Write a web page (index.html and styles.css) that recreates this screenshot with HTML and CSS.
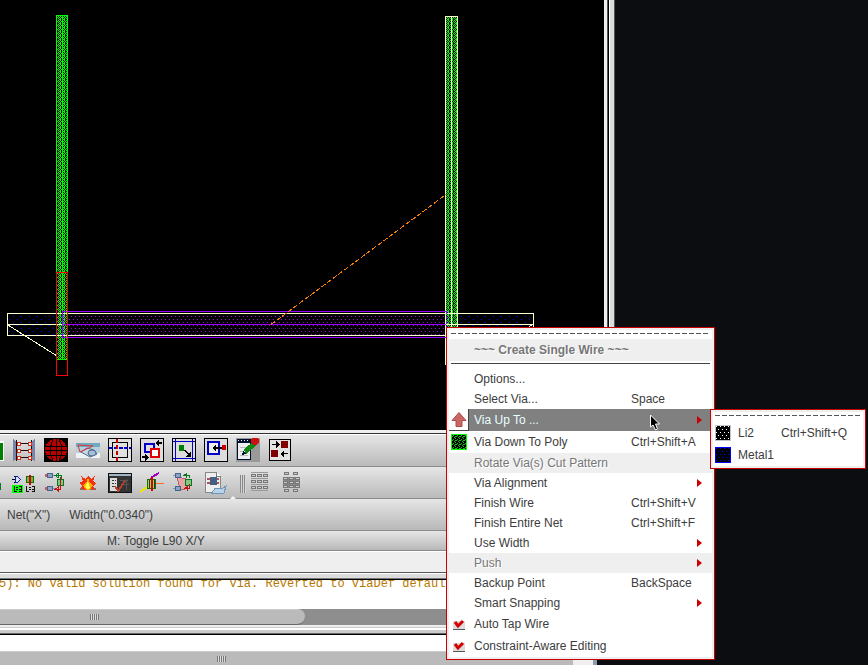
FILE: index.html
```html
<!DOCTYPE html>
<html lang="en">
<head>
<meta charset="utf-8">
<title>Layout Editor</title>
<link rel="stylesheet" href="styles.css">
</head>
<body>
<div class="workspace">
  <main class="editor">
    <section class="view">
      <svg class="drawing" width="604" height="430" shape-rendering="crispEdges" role="img" aria-label="Wire layout">
        <defs>
          <pattern id="poly" width="4" height="4" patternUnits="userSpaceOnUse">
            <path fill="#00ff00" d="M0 0h1v1h-1zM2 0h1v1h-1zM1 1h1v1h-1zM3 1h1v1h-1zM0 2h1v1h-1zM2 2h1v1h-1zM0 3h1v1h-1zM3 3h1v1h-1z"/>
          </pattern>
          <pattern id="metal" width="8" height="6" patternUnits="userSpaceOnUse">
            <path fill="#0000ff" d="M1 1h1v1h-1zM5 4h1v1h-1z"/>
          </pattern>
          <pattern id="wire" width="4" height="6" patternUnits="userSpaceOnUse">
            <path fill="#9900e6" d="M1 1h1v1h-1zM3 4h1v1h-1z"/>
          </pattern>
        </defs>
        <rect x="8" y="314" width="525" height="21" fill="url(#metal)"/>
        <rect x="63" y="312" width="383" height="25" fill="#000"/>
        <rect x="63" y="312" width="383" height="25" fill="url(#wire)"/>
        <rect x="56" y="15" width="12" height="345" fill="url(#poly)"/>
        <rect x="56.5" y="15.5" width="11" height="344" fill="none" stroke="#00ff00"/>
        <path stroke="#00ff00" d="M62.5 15V360"/>
        <rect x="445" y="16" width="13" height="312" fill="url(#poly)"/>
        <path stroke="#ffffcc" fill="none" d="M445.5 365V16.5H457.5V328M451.5 16V328"/>
        <path stroke="#ffffcc" fill="none" d="M7.5 313.5H533.5V335.5H7.5zM8 324.5H62M446 324.5H533M8 325L57 356M533 324L526 329"/>
        <path stroke="#9900ff" fill="none" d="M446 311.5H62.5V337.5H446M62 324.5H446"/>
        <path stroke="#9900ff" stroke-dasharray="3 2" d="M446.5 311V337"/>
        <path stroke="#ff8000" stroke-dasharray="5 2" d="M271 324.5L446 194.5"/>
        <rect x="56.5" y="272.5" width="11" height="103" fill="none" stroke="#ff0000"/>
      </svg>
      <div class="frame-edge"></div>
    </section>

    <div class="toolbar" role="toolbar" aria-label="Edit">
      <button class="tool cut" aria-label="Layer"><svg width="4" height="24"><path fill="#fff" d="M0 3h4v20H0z"/><path fill="#008000" d="M0 5h3v17H0z"/></svg></button>
      <button class="tool" aria-label="Ladder"><svg viewBox="0 0 24 24"><path fill="#7885a8" d="M1 1l4 3v17l-4 2zM23 1l-4 3v17l4 2z"/><path stroke="#111" fill="none" d="M4.500 2V23M19.500 2V23M6 5.500H18M6 12.500H18M6 19.500H18"/><path fill="#fff" stroke="#d92b15" d="M5.500 4.500h3v3h-3zM16.500 4.500h3v3h-3zM5.500 11.500h3v3h-3zM16.500 11.500h3v3h-3zM5.500 18.500h3v3h-3zM16.500 18.500h3v3h-3z"/></svg></button>
      <button class="tool" aria-label="World"><svg viewBox="0 0 24 24"><path d="M0 0h24v24H0z"/><circle cx="12" cy="12" r="11" fill="#b80000"/><path stroke="#000" fill="none" d="M2 8.500H22M1 12.500H23M2 17.500H22M12.500 1V23M9 1Q4 12 9 23M15 1Q21 12 15 23"/></svg></button>
      <button class="tool" aria-label="Preview"><svg viewBox="0 0 24 24" class="smooth"><path fill="#6eabc0" d="M0 5h24v6H0z"/><path fill="#b8d0dc" d="M0 9h24v8H0z"/><path fill="#eef3f5" d="M0 15h24v5H0z"/><path fill="#c6dae5" stroke="#536d91" stroke-width="1" d="M5 14l6-4 7 2 3 4-7 3z"/><path stroke="#dc3434" stroke-width="1" fill="none" d="M2 7L17 8 4 14z"/><ellipse cx="16" cy="15" rx="4" ry="3" fill="#a8bfd4" stroke="#496796"/></svg></button>
      <button class="tool" aria-label="Crosshair"><svg viewBox="0 0 24 24"><path fill="#e0e0e0" stroke="#000" d="M.5.5h23v23H.5z"/><path fill="none" stroke="#000" d="M4.500 4.500h15v15h-15z"/><path stroke="#0000c8" stroke-width="2" stroke-dasharray="4 1" d="M1 10H23"/><path stroke="#c80000" stroke-width="2" stroke-dasharray="4 2" d="M9 1V23"/></svg></button>
      <button class="tool" aria-label="Push out"><svg viewBox="0 0 24 24"><path fill="#ddd" stroke="#000" d="M.5.5h23v23H.5z"/><path fill="none" stroke="#0000c8" stroke-width="2" d="M5 6h9v8H5z"/><path fill="#fff" stroke="#e00000" stroke-width="2" d="M11 11h8v8h-8z"/><path d="M2 18h3v-2l4 3-4 4v-3H2zM22 4h-3V2l-4 3 4 4V6h3z"/></svg></button>
      <button class="tool" aria-label="Stretch"><svg viewBox="0 0 24 24"><path fill="#ddd" stroke="#000" d="M.5.5h23v23H.5z"/><path stroke="#0000c8" d="M3.500 1V23M20.500 1V23M1 3.500H23M1 20.500H23"/><path fill="#008000" d="M7 7h5v6H7z"/><path d="M12 12l2 0 3 4 1-2h1v5h-5v-1l2-1z"/></svg></button>
      <button class="tool" aria-label="Move edge"><svg viewBox="0 0 24 24"><path fill="#ddd" stroke="#000" d="M.5.5h23v23H.5z"/><path fill="#eee" stroke="#0000c8" stroke-width="2" d="M4 4h11v12H4z"/><path d="M8 10l4-4v3h6v2h-6v3z"/><path fill="#c80000" d="M18 7h4v5h-4z"/></svg></button>
      <button class="tool" aria-label="Properties"><svg viewBox="0 0 24 24"><path fill="#999" d="M0 0h24v24H0z"/><path fill="#eee" stroke="#001030" d="M1.500 2.500h13v19h-13z"/><path fill="#001030" d="M1 1h14v4H1z"/><path stroke="#fff" stroke-dasharray="1 2" d="M2 2.500H14"/><path stroke="#bbb" d="M4 9.500h6M4 13.500h4M4 17.500h8"/><path stroke="#118811" stroke-width="5" d="M9 14L19 5"/><path fill="#001030" d="M7 13l-1 4 4-1z"/><circle cx="19" cy="3" r="4" fill="#cc1111"/></svg></button>
      <button class="tool" aria-label="Swap"><svg viewBox="0 0 24 24"><path fill="#e3e3e3" stroke="#000" d="M1.500 1.500h21v21h-21z"/><path fill="#800000" d="M13 3h7v7h-7zM3 12h7v7H3z"/><path d="M4 6h4V3l4 3-4 4V7H4zM20 15h-4v-3l-4 4 4 3v-3h4z"/></svg></button>
    </div>

    <div class="toolbar" role="toolbar" aria-label="Routing">
      <button class="tool cut" aria-label="Via"><svg width="4" height="24"><path fill="#087820" d="M0 11h1v7H0z"/></svg></button>
      <button class="tool" aria-label="Logic check"><svg viewBox="0 0 24 24"><path stroke="#000" d="M0 7.500h9M2 4.500h3M2 10.500h3"/><path fill="#d4e2ff" stroke="#1020a0" d="M3.500 4.500h2l3 3-3 3h-2z"/><path fill="#7db23b" stroke="#087000" d="M14.500 4.500h7v6h-7z"/><path stroke="#c80000" stroke-width="2" d="M18 3v10"/><path fill="#00ff00" d="M0 13h11v8H0z"/><path stroke="#111" fill="none" d="M2.500 14v5h2M4 15.500h2M4 17.500h2M7 14.500h2v5H7M7 17.500h2M14.500 14v5h2M17 15.500h2M17 17.500h2M20 14.500h2v5h-2M20 17.500h2"/></svg></button>
      <button class="tool" aria-label="Generate pins"><svg viewBox="0 0 24 24"><path stroke="#8096a8" d="M4 3.500h7M4 16.500h7"/><path fill="#8da2c2" stroke="#46628e" d="M3.500 1.500h5v4h-5zM3.500 14.500h5v4h-5z"/><path fill="#c65b5b" d="M1 2h2v3H1zM1 15h2v3H1z"/><path stroke="#087820" fill="none" d="M11 3.500h6v4M11 3.500l3-2v4z"/><path fill="#83c783" stroke="#087820" d="M13.500 7.500h6v6h-6z"/><path stroke="#c81010" fill="none" d="M16.500 5v12h-5l3-2v4l-3-2"/></svg></button>
      <button class="tool" aria-label="Explode"><svg viewBox="0 0 24 24"><path fill="#777" d="M4 16h16v2H4z"/><path fill="#f03212" d="M5 4l5 3 2-3 3 3 4-3-2 5 3 3-3 2 2 4-6-1-3 1-5-1 1-4-3-2 4-2z"/><path fill="#ffb000" d="M12 6l2 5 3 2-3 5h-4l-3-5 3-2z"/><path fill="#ffff50" d="M12 9l2 6-2 3-3-3z"/></svg></button>
      <button class="tool" aria-label="Constraints"><svg viewBox="0 0 24 24"><path fill="#333" stroke="#111" d="M.5 1.500h23v19H.5z"/><path fill="#9fb5c8" d="M1 2h22v2H1z"/><path fill="#ddd" d="M2 6h7v13H2z"/><path stroke="#333" stroke-dasharray="2 1" d="M4 8.500h4M4 11.500h4M4 14.500h4"/><path stroke="#555" d="M12 8.500h8M14 12.500h7M18.500 7v11"/><path fill="none" stroke="#b63f2c" stroke-width="2" d="M7 14l3 5 7-10"/></svg></button>
      <button class="tool" aria-label="Probe"><svg viewBox="0 0 24 24"><path stroke="#f2e600" stroke-width="2" d="M0 20l7-5"/><path stroke="#a000c8" stroke-width="2" fill="none" d="M11 8l1-3 7-4"/><path stroke="#ff6820" d="M14 11.500h10"/><path fill="#a4d55e" stroke="#187000" d="M7.500 7.500h8v9h-8z"/><path stroke="#333" d="M9.500 8v8M14.500 8v8"/><path stroke="#d80000" stroke-width="2" d="M12 5v14"/></svg></button>
      <button class="tool" aria-label="Update pins"><svg viewBox="0 0 24 24"><path stroke="#8096a8" d="M1 3.500h8M1 16.500h8"/><path fill="#e8a5a5" stroke="#b86464" d="M5 5l14 3-6 9H8z"/><path fill="#8da2c2" stroke="#46628e" d="M3.500 1.500h5v4h-5zM3.500 14.500h5v4h-5z"/><path stroke="#087820" fill="none" d="M17.500 6V3.500h-6l3-2v4"/><path fill="#83c783" stroke="#087820" d="M13.500 7.500h6v6h-6z"/><path stroke="#c81010" fill="none" d="M17.500 12v4.500h-5l3-2v4"/></svg></button>
      <button class="tool" aria-label="Export"><svg viewBox="0 0 24 24"><path fill="#eee" stroke="#888" d="M1.500.5h11l4 4v16h-15z"/><path fill="#fff" stroke="#777" d="M12.500.5v4h4"/><path stroke="#b45050" stroke-width="2" d="M3 7h12M3 11h12"/><path fill="#426184" d="M6 5h7v8H6z"/><path fill="#b7d3eb" stroke="#7296b7" d="M8 21l3-5 4 1 4-1 3-2-2 7z"/></svg></button>
      <span class="grip"></span>
      <button class="tool" aria-label="Rows"><svg viewBox="0 0 24 24"><g fill="#ccc" stroke="#777"><path d="M3.500 2.500h4v2h-4zM9.500 2.500h4v2h-4zM15.500 2.500h4v2h-4zM3.500 8.500h4v2h-4zM9.500 8.500h4v2h-4zM15.500 8.500h4v2h-4zM3.500 14.500h4v2h-4zM9.500 14.500h4v2h-4zM15.500 14.500h4v2h-4z"/><path stroke="#999" d="M3 .5h17M3 6.500h17M3 12.500h17M3 18.500h17"/></g></svg></button>
      <button class="tool" aria-label="Array"><svg viewBox="0 0 24 24"><path fill="#888" d="M3 5h17v11H3z"/><g fill="#ccc" stroke="#777"><path d="M4.500.5h4v2h-4zM13.500.5h4v2h-4zM3.500 5.500h4v2h-4zM9.500 5.500h4v2h-4zM15.500 5.500h4v2h-4zM3.500 9.500h4v2h-4zM9.500 9.500h4v2h-4zM15.500 9.500h4v2h-4zM3.500 13.500h4v2h-4zM9.500 13.500h4v2h-4zM15.500 13.500h4v2h-4zM4.500 17.500h4v2h-4zM13.500 17.500h4v2h-4z"/></g></svg></button>
      <span class="notch"></span>
    </div>

    <div class="status"><span>Net("X")</span><span>Width("0.0340")</span></div>
    <div class="hint">M: Toggle L90 X/Y</div>
    <div class="prompt"></div>
    <div class="splitter"></div>
  </main>
  <div class="desktop"></div>
</div>

<section class="console">
  <div class="console-main">
    <div class="log"><p>5): No valid solution found for via. Reverted to viaDef defaults</p></div>
    <div class="scroll"><div class="thumb short"><i class="ridges"></i></div></div>
    <div class="divider"></div>
    <div class="entry"></div>
    <div class="scroll low"><div class="thumb"><i class="ridges"></i></div></div>
  </div>
  <div class="console-edge"></div>
  <div class="desktop"></div>
</section>

<nav class="menu main-menu" aria-label="Create Single Wire">
  <div class="tear"></div>
  <h1 class="title">~~~ Create Single Wire ~~~</h1>
  <hr class="rule">
  <button class="item"><span class="label">Options...</span></button>
  <button class="item"><span class="label">Select Via...</span><kbd>Space</kbd></button>
  <button class="item tall active"><span class="icon raised"><svg width="18" height="18"><path fill="#c96767" stroke="#a94d4d" d="M9 1.500L16 9.500h-4v6H6v-6H2z"/></svg></span><span class="label">Via Up To ...</span><span class="arrow"></span></button>
  <button class="item tall"><span class="icon"><svg width="16" height="16" shape-rendering="crispEdges"><defs><pattern id="swatch" width="4" height="4" patternUnits="userSpaceOnUse"><path fill="#00d000" d="M0 0h1v1h-1zM2 1h1v1h-1zM1 2h1v1h-1zM3 3h1v1h-1zM0 2h1v1h-1z"/></pattern></defs><path d="M0 0h16v16H0z"/><path fill="url(#swatch)" d="M1 1h14v14H1z"/><path fill="none" stroke="#0f0" d="M.5.5h15v15H.5z"/></svg></span><span class="label">Via Down To Poly</span><kbd>Ctrl+Shift+A</kbd></button>
  <button class="item" disabled><span class="label">Rotate Via(s) Cut Pattern</span></button>
  <button class="item"><span class="label">Via Alignment</span><span class="arrow"></span></button>
  <button class="item"><span class="label">Finish Wire</span><kbd>Ctrl+Shift+V</kbd></button>
  <button class="item"><span class="label">Finish Entire Net</span><kbd>Ctrl+Shift+F</kbd></button>
  <button class="item"><span class="label">Use Width</span><span class="arrow"></span></button>
  <button class="item" disabled><span class="label">Push</span><span class="arrow"></span></button>
  <button class="item"><span class="label">Backup Point</span><kbd>BackSpace</kbd></button>
  <button class="item"><span class="label">Smart Snapping</span><span class="arrow"></span></button>
  <label class="item tall"><span class="icon"><input type="checkbox" checked><svg class="tick" width="12" height="12"><path fill="none" stroke="#d40000" stroke-width="3" d="M2 4l3 4 5-5"/></svg></span><span class="label">Auto Tap Wire</span></label>
  <label class="item tall"><span class="icon"><input type="checkbox" checked><svg class="tick" width="12" height="12"><path fill="none" stroke="#d40000" stroke-width="3" d="M2 4l3 4 5-5"/></svg></span><span class="label">Constraint-Aware Editing</span></label>
</nav>

<nav class="menu sub-menu" aria-label="Via Up To">
  <div class="tear"></div>
  <button class="item tall"><span class="icon"><svg width="16" height="16" shape-rendering="crispEdges"><defs><pattern id="li" width="4" height="6" patternUnits="userSpaceOnUse"><path fill="#fff" d="M1 1h1v1h-1zM3 4h1v1h-1z"/></pattern></defs><path d="M0 0h16v16H0z"/><path fill="url(#li)" d="M1 1h14v14H1z"/><path fill="none" stroke="#c4c4cc" d="M.5.5h15v15H.5z"/></svg></span><span class="label">Li2</span><kbd>Ctrl+Shift+Q</kbd></button>
  <button class="item tall"><span class="icon"><svg width="16" height="16" shape-rendering="crispEdges"><defs><pattern id="m1" width="4" height="6" patternUnits="userSpaceOnUse"><path fill="#00f" d="M1 1h1v1h-1zM3 4h1v1h-1z"/></pattern></defs><path d="M0 0h16v16H0z"/><path fill="url(#m1)" d="M1 1h14v14H1z"/><path fill="none" stroke="#00f" d="M.5.5h15v15H.5z"/></svg></span><span class="label">Metal1</span></button>
</nav>

<svg class="pointer" width="12" height="18" aria-hidden="true"><path fill="#000" stroke="#fff" d="M1.500 1v12l2.500-2 2.500 5 2-1-2-5h4z"/></svg>
</body>
</html>
```
FILE: styles.css
```css
* { box-sizing: border-box; }

body {
  margin: 0;
  height: 100vh;
  display: flex;
  flex-direction: column;
  overflow: hidden;
  position: relative;
  background: #0b0d11;
  color: #3c3c3c;
  font: 12px/20px "Liberation Sans", Arial, sans-serif;
}

button {
  border: 0;
  padding: 0;
  background: none;
  color: inherit;
  font: inherit;
  text-align: left;
}

.workspace { flex: 1; min-height: 0; display: flex; }
.editor { flex: 1; min-width: 0; display: flex; flex-direction: column; }
.desktop { flex: 0 0 253px; background: #0b0d11; }

.view { flex: 1; min-height: 0; display: flex; background: #000; }
.drawing { display: block; flex: 1; min-width: 0; }
.frame-edge {
  width: 11px;
  background: linear-gradient(90deg, #efefef 3px, #555 3px 4px, #000 4px 5px, #fff 5px 6px, #dcdcdc 6px 10px, #555 10px);
}

.toolbar {
  position: relative;
  flex: none;
  height: 32px;
  display: flex;
  align-items: center;
  gap: 8px;
  padding-top: 2px;
  border-bottom: 1px solid #8c8c8c;
  background: linear-gradient(#e6e6e6, #bababa);
}
.view + .toolbar {
  height: 37px;
  padding-top: 4px;
  background: linear-gradient(#efefef 3px, #333 3px 4px, #fff 4px 5px, #e6e6e6 5px, #bababa);
}
.tool { flex: none; width: 24px; height: 24px; }
.tool.cut { width: 4px; }
.tool svg { display: block; shape-rendering: crispEdges; }
.tool svg.smooth { shape-rendering: auto; }
.grip {
  width: 6px;
  height: 18px;
  margin: 0 -6px 0 4px;
  background: repeating-linear-gradient(90deg, #888 0 1px, #d8d8d8 1px 2px);
}
.notch {
  position: absolute;
  left: 230px;
  bottom: -1px;
  border: 3px solid transparent;
  border-top: 0;
  border-bottom-color: #f4f4f4;
}

.status, .hint { flex: none; border-bottom: 1px solid #8c8c8c; background: linear-gradient(#e6e6e6, #b8b8b8); }
.status { height: 32px; padding: 6px 7px; display: flex; gap: 19px; }
.hint { height: 20px; padding-left: 107px; }
.prompt { flex: none; height: 22px; border-top: 1px solid #fff; border-bottom: 1px solid #555; background: #efefef; }
.splitter { flex: none; height: 7px; background: linear-gradient(#fff 1px, #dcdcdc 1px 5px, #777 5px 6px, #000 6px); }

.console { flex: none; display: flex; }
.console-main { flex: 1; min-width: 0; background: #fff; }
.console .desktop { flex-basis: 271px; }
.console-edge { width: 24px; background: linear-gradient(90deg, #efefef 20px, #8b9bb0 20px); }
.log { height: 29px; overflow: hidden; }
.log p {
  margin: -4px 0 0 -1px;
  color: #b87800;
  font: 12px/16px "Liberation Mono", monospace;
  white-space: pre;
}
.scroll { display: flex; height: 16px; background: #8e8e8e; }
.scroll.low { height: 14px; }
.thumb {
  flex: 1;
  display: flex;
  align-items: center;
  justify-content: center;
  padding-right: 131px;
  background: #bababa;
  border-top: 1px solid #ccc;
}
.thumb.short {
  flex: 0 0 305px;
  padding-right: 117px;
  border-bottom: 1px solid #666;
  border-radius: 0 8px 8px 0;
}
.ridges { width: 9px; height: 6px; background: repeating-linear-gradient(90deg, #777 0 1px, #ddd 1px 2px); }
.divider { height: 10px; background: linear-gradient(#eee 2px, #ccc 2px 3px, #fff 3px 5px, #ccc 5px 8px, #666 8px 9px, #000 9px); }
.entry { height: 16px; }

.menu {
  position: absolute;
  padding: 2px;
  border: 1px solid #c80000;
  background: #fff;
  box-shadow: inset 0 0 0 2px #efefef;
}
.main-menu { left: 446px; top: 327px; width: 269px; }
.sub-menu { left: 710px; top: 409px; width: 156px; }
.tear {
  height: 9px;
  margin: 0 2px;
  background: repeating-linear-gradient(90deg, #555 0 5px, transparent 5px 7px) 0 3px / 100% 1px no-repeat;
}
.title {
  margin: 0;
  padding-left: 25px;
  background: #efefef;
  color: #777;
  font-size: 12px;
  line-height: 22px;
  text-shadow: 1px 1px #fff;
}
.rule { margin: 2px 2px 5px; border: 0; border-top: 1px solid #444; }
.item {
  display: grid;
  grid-template-columns: 25px 157px 1fr;
  align-items: center;
  width: 100%;
  height: 20px;
}
.item.tall { height: 22px; }
.item .label { grid-column: 2; white-space: nowrap; }
.item .icon { grid-column: 1; grid-row: 1; display: flex; align-items: center; padding-left: 2px; position: relative; }
.item kbd { grid-column: 3; font: inherit; white-space: nowrap; }
.item .arrow {
  grid-column: 3;
  margin-left: 66px;
  width: 5px;
  border: 4px solid transparent;
  border-left: 5px solid #c80000;
  border-right: 0;
}
.item:disabled { background: #efefef; color: #777; text-shadow: 1px 1px #fff; }
.item.active { background: #808080; color: #e8ffff; }
.item .raised { width: 20px; height: 22px; padding-left: 1px; background: #fff; border-right: 1px solid #444; border-bottom: 1px solid #444; }
.item input {
  appearance: none;
  width: 12px;
  height: 9px;
  margin: 3px 0 0 2px;
  border: 0;
  border-bottom: 1px solid #555;
  background: #ddd;
}
.tick { position: absolute; left: 4px; top: 0; }
.sub-menu .tear { margin-bottom: 1px; }
.sub-menu .item { grid-template-columns: 25px 43px 1fr; }
.pointer { position: absolute; left: 649px; top: 414px; }
```
